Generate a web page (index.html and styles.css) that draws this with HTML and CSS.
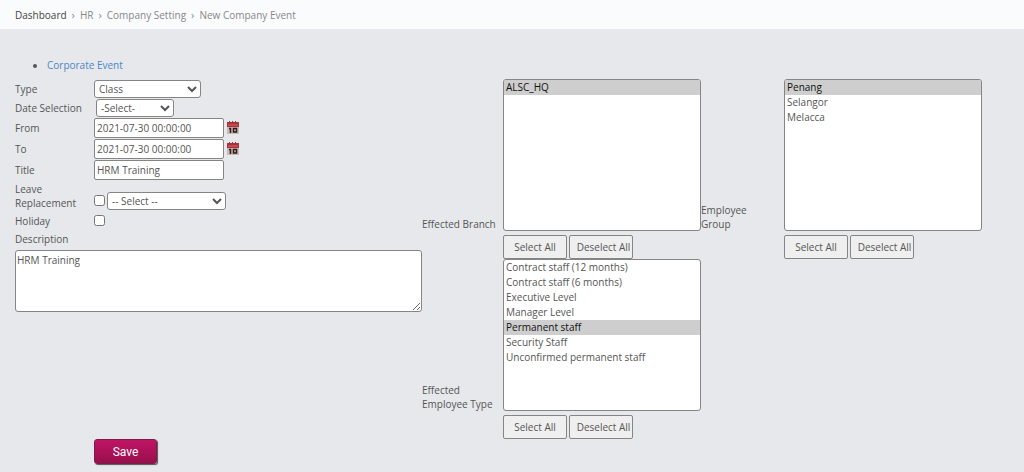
FILE: index.html
```html
<!DOCTYPE html>
<html lang="en">

<head>
    <meta charset="utf-8">
    <title>New Company Event</title>
    <link rel="stylesheet" href="styles.css">
</head>

<body>
    <svg class="sprite" aria-hidden="true">
        <symbol id="calendar" viewBox="0 0 12 13">
            <rect x="0" y="1" width="12" height="12" fill="#cdb8b4" />
            <rect x="0" y="1" width="12" height="5" fill="#b03238" />
            <path d="M2.500 0v2M5.500 0v2M8.500 0v2" stroke="#7b4044" />
            <path d="M1 4h10" stroke="#d0686a" />
            <path d="M2 7.500h1.500v4.500" fill="none" stroke="#2a1c1c" stroke-width="1.500" />
            <rect x="6.500" y="7.500" width="3" height="3.500" fill="none" stroke="#2a1c1c" stroke-width="1.500" />
        </symbol>
    </svg>

    <nav class="breadcrumb">
        <a class="home" href="#">Dashboard</a>
        <span class="sep">›</span>
        <a href="#">HR</a>
        <span class="sep">›</span>
        <a href="#">Company Setting</a>
        <span class="sep">›</span>
        <span>New Company Event</span>
    </nav>

    <form id="eventForm">
        <ul class="tabs">
            <li><a href="#">Corporate Event</a></li>
        </ul>

        <div class="columns">
            <div class="details">
                <div class="row selectRow">
                    <label for="type">Type</label>
                    <select id="type" class="type">
                        <option>Class</option>
                    </select>
                </div>
                <div class="row selectRow">
                    <label for="dateSelection">Date Selection</label>
                    <select id="dateSelection" class="dateSelection">
                        <option>-Select-</option>
                    </select>
                </div>
                <div class="row">
                    <label for="from">From</label>
                    <input type="text" id="from" value="2021-07-30 00:00:00">
                    <svg class="calendar"><use href="#calendar" /></svg>
                </div>
                <div class="row">
                    <label for="to">To</label>
                    <input type="text" id="to" value="2021-07-30 00:00:00">
                    <svg class="calendar"><use href="#calendar" /></svg>
                </div>
                <div class="row">
                    <label for="title">Title</label>
                    <input type="text" id="title" value="HRM Training">
                </div>
                <div class="row replacement">
                    <label for="replacement">Leave Replacement</label>
                    <input type="checkbox" id="replacement">
                    <select class="replacementType" aria-label="Replacement type">
                        <option>-- Select --</option>
                    </select>
                </div>
                <div class="row">
                    <label for="holiday">Holiday</label>
                    <input type="checkbox" id="holiday">
                </div>
                <label class="descriptionLabel" for="description">Description</label>
                <textarea id="description">HRM Training</textarea>
            </div>

            <div class="lists">
                <label for="branch">Effected Branch</label>
                <select id="branch" multiple>
                    <option selected>ALSC_HQ</option>
                </select>
                <label class="group" for="group">Employee Group</label>
                <select id="group" multiple>
                    <option selected>Penang</option>
                    <option>Selangor</option>
                    <option>Melacca</option>
                </select>

                <div class="buttons">
                    <button type="button">Select All</button>
                    <button type="button" class="deselect">Deselect All</button>
                </div>
                <div class="buttons groupButtons">
                    <button type="button">Select All</button>
                    <button type="button" class="deselect">Deselect All</button>
                </div>

                <label class="employeeType" for="employeeType">Effected Employee Type</label>
                <select id="employeeType" multiple>
                    <option>Contract staff (12 months)</option>
                    <option>Contract staff (6 months)</option>
                    <option>Executive Level</option>
                    <option>Manager Level</option>
                    <option selected>Permanent staff</option>
                    <option>Security Staff</option>
                    <option>Unconfirmed permanent staff</option>
                </select>
                <div class="buttons">
                    <button type="button">Select All</button>
                    <button type="button" class="deselect">Deselect All</button>
                </div>
            </div>
        </div>

        <button type="submit" class="save">Save</button>
    </form>
</body>

</html>
```
FILE: styles.css
```css
* {
    box-sizing: border-box;
}

body {
    margin: 0;
    background-color: #e6e8eb;
    color: #555;
    font: 10px/14px "Open Sans", sans-serif;
}

input, select, textarea, button {
    margin: 0;
    font: inherit;
    color: #555;
}

a {
    color: inherit;
    text-decoration: none;
}

.sprite {
    display: none;
}

.breadcrumb {
    display: flex;
    align-items: center;
    gap: 5px;
    height: 29px;
    padding: 0 15px;
    background-color: #fafbfc;
    color: #888;
}

.breadcrumb .home {
    color: #444;
}

.breadcrumb .sep {
    font-size: 11px;
}

#eventForm {
    padding: 29px 15px 8px;
}

.tabs {
    margin: 0 0 7px;
    padding-left: 32px;
}

.tabs a {
    color: #4a86c8;
}

.columns {
    display: flex;
    align-items: flex-start;
}

.details {
    flex: 0 1 407px;
}

.row {
    display: flex;
    align-items: center;
    height: 21px;
}

.row.selectRow {
    height: 19px;
}

.row label {
    flex: 0 0 79px;
}

.row select {
    height: 18px;
    background-color: #fff;
    border: 1px solid #858585;
    border-radius: 3px;
}

.row .type {
    width: 107px;
}

.row .dateSelection {
    width: 78px;
    margin-left: 2px;
}

.row input[type="text"] {
    width: 130px;
    height: 20px;
    padding: 1px 2px;
    border: 1px solid #858585;
    border-radius: 2px;
}

.calendar {
    width: 12px;
    height: 13px;
    margin-left: 3px;
}

.row input[type="checkbox"] {
    width: 11px;
    height: 11px;
}

.row.replacement {
    height: 30px;
    align-items: flex-end;
}

.replacement input[type="checkbox"] {
    margin-bottom: 4px;
}

.row .replacementType {
    width: 119px;
    margin-left: 2px;
}

.descriptionLabel {
    display: block;
    margin-top: 1px;
}

#description {
    display: block;
    width: 100%;
    height: 62px;
    margin-top: 4px;
    padding: 2px 1px;
    border: 1px solid #858585;
    border-radius: 3px;
}

.lists {
    display: grid;
    grid-template-columns: 81px 198px 83px 198px;
    align-items: end;
}

.lists select {
    width: 198px;
    height: 152px;
    padding: 0;
    background-color: #fff;
    border: 1px solid #858585;
    border-radius: 3px;
}

.lists .group {
    padding-right: 24px;
}

.lists .employeeType {
    grid-column: 1;
}

.buttons {
    display: flex;
    grid-column: 2;
    gap: 2px;
    padding-top: 4px;
}

.groupButtons {
    grid-column: 4;
}

.buttons button {
    width: 64px;
    height: 24px;
    padding: 0;
    background-color: #efefef;
    border: 1px solid #858585;
    border-radius: 2px;
    white-space: nowrap;
}

.buttons .deselect {
    padding-left: 5px;
}

.save {
    display: block;
    width: 63px;
    height: 25px;
    margin-left: 79px;
    background: linear-gradient(#c01464, #98104c);
    border: 1px solid #7c1c48;
    border-radius: 3px;
    box-shadow: 1px 1px 1px #555;
    color: #fff;
    font: 12px Roboto, sans-serif;
}
```
